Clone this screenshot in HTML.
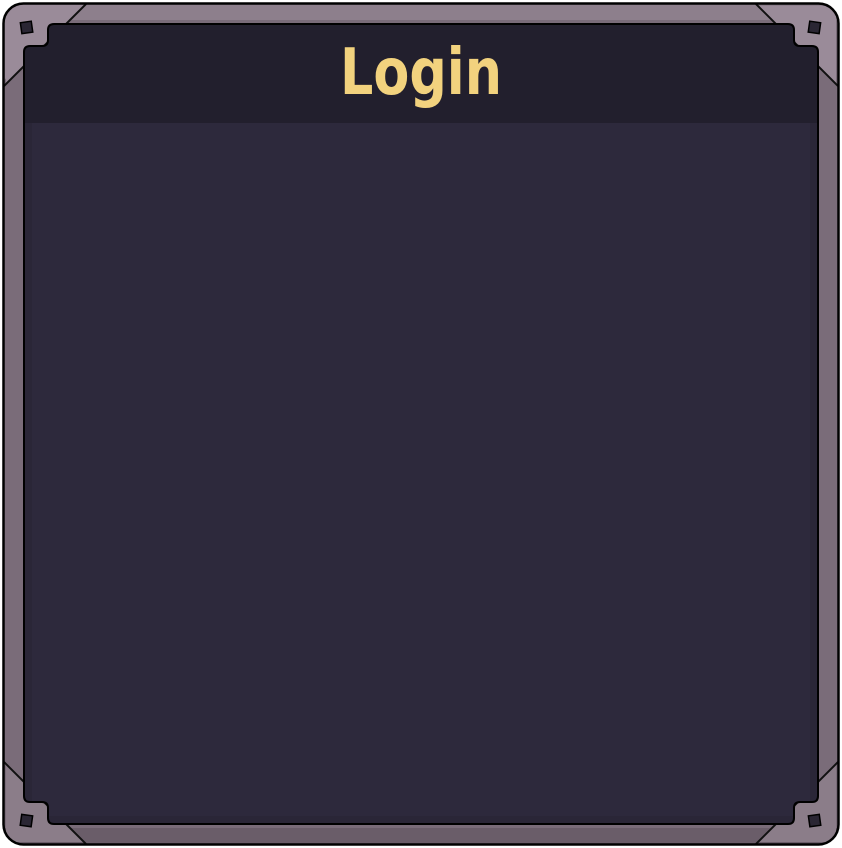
<!DOCTYPE html>
<html><head><style>
html,body{margin:0;padding:0;background:#fff;width:842px;height:848px;overflow:hidden}
svg{display:block}
</style></head><body>
<svg width="842" height="848" viewBox="0 0 842 848" xmlns="http://www.w3.org/2000/svg">
<defs>
<clipPath id="p"><path d="M54,24 H788 Q794,24 794,30 V40 Q794,46 800,46 H812 Q818,46 818,52 V796 Q818,802 812,802 H800 Q794,802 794,808 V818 Q794,824 788,824 H54 Q48,824 48,818 V808 Q48,802 42,802 H30 Q24,802 24,796 V52 Q24,46 30,46 H42 Q48,46 48,40 V30 Q48,24 54,24 Z"/></clipPath>
<clipPath id="o"><rect x="4" y="4" width="834" height="840" rx="19"/></clipPath>
</defs>
<g clip-path="url(#o)">
<rect x="0" y="0" width="842" height="848" fill="#7a6c79"/>
<rect x="0" y="4" width="842" height="16" fill="#8d7f8c"/>
<rect x="0" y="828" width="842" height="16" fill="#6a5d69"/>
<path d="M0,84 L0,0 L84,0 L84,6 Z" fill="#9a8b99"/>
<path d="M6,84 L6,6 L84,6 Z" fill="#9a8b99"/>
<path d="M836,84 L836,6 L758,6 Z" fill="#9a8b99"/>
<path d="M6,764 L6,842 L84,842 Z" fill="#8b7d89"/>
<path d="M836,764 L836,842 L758,842 Z" fill="#8b7d89"/>
<g stroke="#111" stroke-width="2">
<line x1="4" y1="86" x2="86" y2="4"/><line x1="838" y1="86" x2="756" y2="4"/>
<line x1="4" y1="762" x2="86" y2="844"/><line x1="838" y1="762" x2="756" y2="844"/>
</g>
</g>
<rect x="3.5" y="3.5" width="835" height="841" rx="20" fill="none" stroke="#000" stroke-width="2.5"/>
<g fill="#2a2633" stroke="#000" stroke-width="1.5">
<rect x="21" y="22" width="11" height="11" transform="rotate(-8 26 27)"/>
<rect x="809" y="22" width="11" height="11" transform="rotate(8 815 27)"/>
<rect x="21" y="815" width="11" height="11" transform="rotate(8 26 820)"/>
<rect x="809" y="815" width="11" height="11" transform="rotate(-8 815 820)"/>
</g>
<g clip-path="url(#p)">
<rect x="0" y="0" width="842" height="848" fill="#2d293c"/>
<rect x="0" y="0" width="842" height="123" fill="#221f2d"/>
<rect x="24" y="123" width="8" height="700" fill="#2a2637"/>
<rect x="810" y="123" width="8" height="700" fill="#2a2637"/>
<rect x="24" y="816" width="794" height="8" fill="#2a2637"/>
</g>
<path d="M54,24 H788 Q794,24 794,30 V40 Q794,46 800,46 H812 Q818,46 818,52 V796 Q818,802 812,802 H800 Q794,802 794,808 V818 Q794,824 788,824 H54 Q48,824 48,818 V808 Q48,802 42,802 H30 Q24,802 24,796 V52 Q24,46 30,46 H42 Q48,46 48,40 V30 Q48,24 54,24 Z" fill="none" stroke="#000" stroke-width="2"/>
<text x="421" y="94" text-anchor="middle" font-family="'DejaVu Sans','Liberation Sans',sans-serif" font-weight="bold" font-size="64" fill="#f2d27e" textLength="162" lengthAdjust="spacingAndGlyphs">Login</text>
</svg>
</body></html>
